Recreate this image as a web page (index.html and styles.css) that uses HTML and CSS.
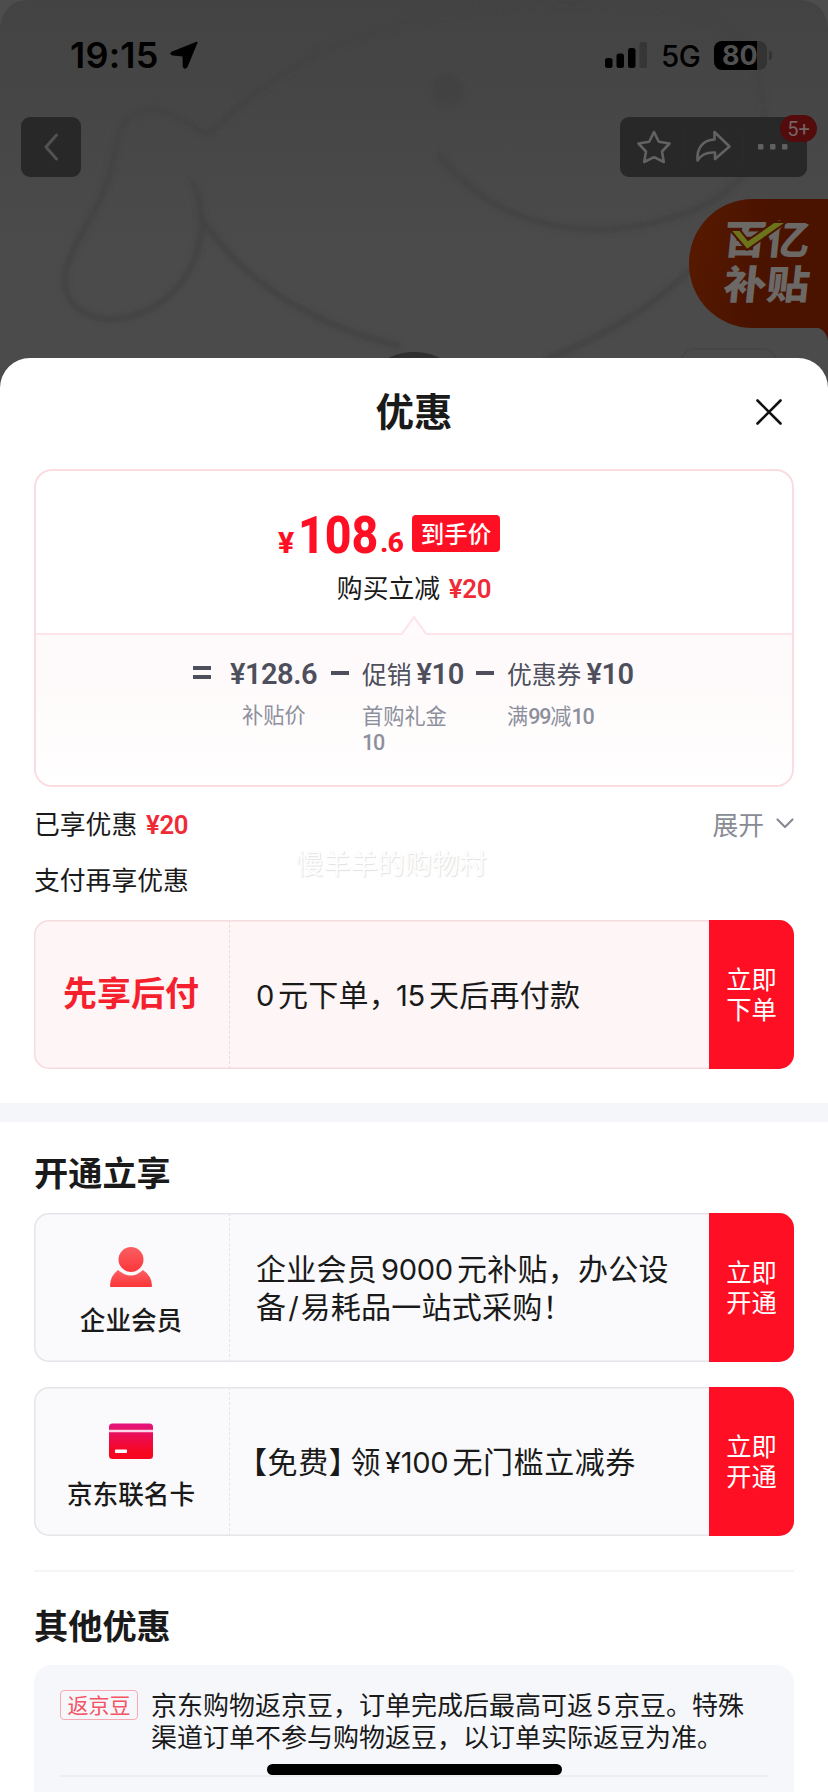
FILE: index.html
```html
<!DOCTYPE html>
<html lang="zh-CN">
<head>
<meta charset="utf-8">
<title>优惠</title>
<link rel="stylesheet" href="styles.css">
</head>
<body>
<div class="screen">
  <header class="scene">
    <svg class="backdrop" viewBox="0 0 828 400" width="828" height="400" fill="none">
      <defs><filter id="soft" x="-5%" y="-5%" width="110%" height="110%"><feGaussianBlur stdDeviation="2.800"/></filter></defs>
      <path d="M0 0H30Q3 0 0 28ZM828 0H798Q825 0 828 28Z" fill="#4d4d4d"/>
      <g stroke="#424242" stroke-width="6" filter="url(#soft)" stroke-linejoin="round">
        <path d="M207 135C275 70 330 40 414 20C520 -8 640 -4 715 22C755 45 765 80 763 120C758 175 720 205 670 218C600 240 530 228 485 198C460 180 445 165 438 152"/>
        <path d="M207 135C170 108 140 98 122 126C112 150 115 175 92 215C65 262 55 285 75 306C105 332 155 316 180 284C207 250 206 210 192 180"/>
        <path d="M198 213C240 280 310 325 400 346M548 358C610 335 660 300 692 268"/>
        <circle cx="448" cy="90" r="14" fill="#424242"/>
      </g>
      <circle cx="414" cy="411" r="59" fill="#303030"/>
      <rect x="681" y="349" width="96" height="40" rx="14" stroke="#464646" stroke-width="1.5"/>
    </svg>
    <div class="status">
      <span class="clock">19:15</span>
      <svg class="loc" viewBox="0 0 28 28" width="28" height="28"><path d="M26.500 .8Q28 .3 27.400 2L17.500 26Q15 29.500 12.800 26L12.500 15.500 2.500 14.500Q-1.500 13 1.500 10.800Z"/></svg>
      <svg class="signal" viewBox="0 0 42 27" width="42" height="27"><rect y="16" width="7.500" height="10" rx="2.500"/><rect x="11.500" y="11.500" width="7.500" height="14.500" rx="2.500"/><rect x="23" y="6" width="7.500" height="20" rx="2.500"/><rect x="34.500" width="7.500" height="26" rx="2.500" fill="#363636"/></svg>
      <span class="net">5G</span>
      <span class="battery">80</span><i class="nub"></i>
    </div>
    <div class="nav">
      <span class="back"><svg viewBox="0 0 60 60" width="60" height="60" fill="none"><path d="M35.500 18L25 30 35.500 42" stroke="#515151" stroke-width="3" stroke-linecap="round" stroke-linejoin="round"/></svg></span>
      <span class="tools">
        <svg viewBox="0 0 187 60" width="187" height="60" fill="none" stroke="#626262" stroke-width="2.600" stroke-linejoin="round">
          <path d="M34 15L38.800 24.800 49.500 26.500 42 34.500 43.800 45 34 40.200 24.200 45 26 34.500 18.500 26.500 29.200 24.800Z"/>
          <path d="M94.500 15L109.500 29.500 95 42V35.500C86 35 81 37.500 77.500 43.500C76.500 31 83 23 94.500 22.500Z"/>
          <path d="M64 16V44M123 16V44" stroke="#2d2d2d" stroke-width="1"/>
          <g fill="#606060" stroke="none"><rect x="138" y="27" width="5.500" height="5.500" rx="1"/><rect x="150" y="27" width="5.500" height="5.500" rx="1"/><rect x="162" y="27" width="5.500" height="5.500" rx="1"/></g>
        </svg>
        <b class="count">5+</b>
      </span>
    </div>
    <div class="subsidy">
      <span>百亿</span><span>补贴</span>
      <svg class="tick" viewBox="0 0 60 32" width="60" height="32"><path d="M2 9H12L20 19 46 1H59L19 29Z" fill="#6c741b" stroke="#4b1300" stroke-width="2"/></svg>
      <svg class="flare" viewBox="0 0 14 14" width="14" height="14"><path d="M0 0Q12 1 14 14V0Z" fill="#4a1100"/></svg>
    </div>
  </header>

  <main class="sheet">
    <div class="title">
      <h1>优惠</h1>
      <svg class="close" viewBox="0 0 26 26" width="26" height="26"><path d="M1.500 1.500L24.500 24.500M24.500 1.500L1.500 24.500" stroke="#111" stroke-width="2.600" stroke-linecap="round"/></svg>
    </div>

    <section class="deal">
      <div class="deal-top">
        <div class="price"><span class="yen">¥</span><span class="big">108</span><span class="dec">.6</span><span class="chip">到手价</span></div>
        <div class="save">购买立减 <b class="num">¥20</b></div>
      </div>
      <div class="deal-bottom">
        <svg class="peak" viewBox="0 0 30 20" width="30" height="20"><path d="M0 20H2L15 2 28 20H30" fill="#fffafb" stroke="#fce4e8" stroke-width="2"/></svg>
        <div class="formula">
          <i class="equals"></i>
          <div class="term first"><p><b class="num">¥128.6</b></p><small>补贴价</small></div>
          <i class="minus"></i>
          <div class="term promo"><p>促销<b class="num">¥10</b></p><small>首购礼金<br><em class="num">10</em></small></div>
          <i class="minus"></i>
          <div class="term coupon"><p>优惠券<b class="num">¥10</b></p><small>满<em class="num">99</em>减<em class="num">10</em></small></div>
        </div>
      </div>
    </section>

    <div class="line enjoyed"><span>已享优惠 <b class="num">¥20</b></span><span class="expand">展开<svg viewBox="0 0 18 12" width="18" height="12" fill="none"><path d="M1.500 1.500L9 9 16.500 1.500" stroke="#888b94" stroke-width="2.200" stroke-linecap="round" stroke-linejoin="round"/></svg></span></div>
    <div class="line again">支付再享优惠<span class="mark">慢羊羊的购物村</span></div>

    <article class="offer pink">
      <div class="kind"><strong>先享后付</strong></div>
      <p class="desc"><span><i class="lat zero">0</i>元下单，<i class="lat after">15</i>天后再付款</span></p>
      <div class="act"><span>立即</span><span>下单</span></div>
    </article>
  </main>

  <section class="block opening">
    <h2>开通立享</h2>
    <article class="offer">
      <div class="kind">
        <svg viewBox="0 0 44 42" width="44" height="42"><defs><linearGradient id="rd" x2="0" y2="1"><stop stop-color="#fa6164"/><stop offset="1" stop-color="#fb3438"/></linearGradient></defs><g fill="url(#rd)"><path d="M9 24Q22 35 34 24Q43 30 43 40Q43 41 42 41H2Q1 41 1 40Q1 30 9 24Z"/><circle cx="22" cy="13.500" r="13.500" stroke="#fafafc" stroke-width="2"/></g></svg>
        <span>企业会员</span>
      </div>
      <p class="desc"><span>企业会员<i class="lat">9000</i>元补贴，办公设<br>备<i class="lat slash">/</i>易耗品一站式采购！</span></p>
      <div class="act"><span>立即</span><span>开通</span></div>
    </article>
    <article class="offer">
      <div class="kind">
        <svg viewBox="0 0 44 42" width="44" height="42"><defs><linearGradient id="cd" x2="0" y2="1"><stop stop-color="#e3147e"/><stop offset=".8" stop-color="#f6061f"/></linearGradient></defs><rect y="3.500" width="44" height="35.500" rx="3.500" fill="url(#cd)"/><path d="M0 11H44" stroke="#fcd5e8" stroke-width="2.400"/><rect x="6" y="29.500" width="12" height="3.500" rx=".8" fill="#fff"/></svg>
        <span>京东联名卡</span>
      </div>
      <p class="desc free"><span><i class="half">【</i>免费<i class="half">】</i><i class="lead">领</i><i class="lat">¥100</i>无门槛立减券</span></p>
      <div class="act"><span>立即</span><span>开通</span></div>
    </article>
  </section>

  <section class="block other">
    <h2>其他优惠</h2>
    <div class="perks">
      <div class="perk"><span class="tag">返京豆</span><p>京东购物返京豆，订单完成后最高可返<i class="lat">5</i>京豆。特殊<br>渠道订单不参与购物返豆，以订单实际返豆为准。</p></div>
    </div>
  </section>
  <div class="home"></div>
</div>
</body>
</html>
```
FILE: styles.css
```css
* { box-sizing: border-box; }
body { margin: 0; background: #4c4c4c; }
h1, h2, p { margin: 0; }
i, em { font-style: normal; }
.screen {
  position: relative;
  width: 828px;
  height: 1792px;
  overflow: hidden;
  color: #1a1a1a;
  background: linear-gradient(#434343, #4b4b4b 260px, #4b4b4b);
  font-family: "Noto Sans CJK SC", sans-serif;
}
.scene { position: relative; height: 358px; }
.backdrop { position: absolute; left: 0; top: 0; }

.status {
  position: relative;
  display: flex;
  align-items: center;
  height: 110px;
  padding: 0 55px 0 70px;
  color: #000;
  font-family: Inter, sans-serif;
}
.clock { width: 100px; font-size: 36px; font-weight: 600; letter-spacing: 0.2px; white-space: nowrap; }
.signal { margin-left: 407px; }
.net { margin-left: 14px; width: 53px; font-size: 29.500px; font-weight: 500; letter-spacing: -0.6px; margin-top: 2px; }
.battery {
  width: 53px;
  height: 29px;
  padding-left: 8px;
  border-radius: 8px;
  background: linear-gradient(90deg, #000 43px, #333 43px);
  color: #515151;
  font-size: 27px;
  font-weight: 700;
  line-height: 30px;
}
.nub { width: 3px; height: 9px; margin-left: 2px; border-radius: 0 4px 4px 0; background: #333; }

.nav {
  position: relative;
  display: flex;
  justify-content: space-between;
  margin-top: 7px;
  padding: 0 21px;
}
.back, .tools { position: relative; height: 60px; border-radius: 9px; background: #282828; }
.count {
  position: absolute;
  top: -2px;
  right: -10px;
  width: 37px;
  height: 27px;
  border-radius: 14px;
  background: #530b0b;
  color: #746464;
  font: 400 20px/28px Roboto, sans-serif;
  text-align: center;
}
.subsidy {
  position: absolute;
  right: 0;
  top: 199px;
  display: flex;
  flex-direction: column;
  align-items: flex-start;
  width: 139px;
  height: 129px;
  padding: 15px 0 0 35px;
  border-radius: 64px 0 0 64px;
  background: linear-gradient(100deg, #581a00, #4a1300 50%);
  color: #6b6866;
}
.subsidy span { font-size: 43px; font-weight: 800; line-height: 45px; transform: skewX(-6deg) scaleY(.92); white-space: nowrap; }
.tick { position: absolute; left: 39px; top: 22px; }
.flare { position: absolute; right: 0; bottom: -13px; }

.sheet {
  position: relative;
  height: 745px;
  padding: 0 34px;
  border-radius: 30px 30px 0 0;
  background: #fff;
}
.title { display: flex; align-items: center; justify-content: center; height: 111px; padding-bottom: 9px; }
h1 { font-size: 38.500px; line-height: 50px; font-weight: 700; }
.close { position: absolute; right: 46px; top: 41px; }

.num { font-family: Roboto, "Noto Sans CJK SC", sans-serif; font-weight: 600; }
.deal { height: 318px; border: 2px solid #fadce1; border-radius: 18px; overflow: hidden; }
.deal-top { height: 162px; padding-top: 45px; }
.price {
  display: flex;
  align-items: flex-end;
  height: 46px;
  margin-left: 242px;
  color: #ff0f23;
  font-family: Roboto, sans-serif;
  font-weight: 800;
}
.yen { width: 20px; margin-bottom: 4px; font-size: 30px; line-height: 31px; }
.big { width: 82px; margin-bottom: -1px; font-size: 51px; line-height: 55px; transform: scaleX(.91); transform-origin: 0 0; }
.dec { width: 32px; margin-bottom: 4px; font-size: 28.500px; line-height: 31px; letter-spacing: -1px; }
.chip {
  width: 88px;
  height: 37px;
  margin-bottom: 10px;
  border-radius: 4px;
  background: #ff0f23;
  color: #fff;
  font: 500 23.500px/36px "Noto Sans CJK SC", sans-serif;
  text-align: center;
}
.save { margin-top: 6px; text-align: center; font-size: 25.800px; line-height: 38px; }
.save .num, .enjoyed .num { margin-left: 3px; color: #ef2b37; letter-spacing: -0.3px; }
.deal-bottom {
  position: relative;
  height: 152px;
  border-top: 2px solid #fce4e8;
  background: linear-gradient(#fef9fa, #fffdfd 130px, #fff);
}
.peak { position: absolute; left: 363px; top: -20px; }
.formula { display: flex; padding: 18px 0 0 157px; color: #4d505c; }
.term p { font-size: 24.800px; line-height: 40px; white-space: nowrap; }
.term p .num { font-size: 29px; letter-spacing: -0.5px; }
.term small { display: block; margin-top: 8px; color: #8d909c; font-size: 21.200px; line-height: 26px; }
.term small .num { font-weight: 500; font-size: 21.500px; letter-spacing: -1.200px; }
.first { width: 101px; margin-left: 19px; }
.first small { margin: 7px 0 0 12px; }
.promo { width: 114px; margin-left: 13px; }
.coupon { margin-left: 13px; }
.promo p .num, .coupon p .num { margin-left: 5px; }
.equals { width: 18px; height: 13px; margin-top: 13px; border-top: 4px solid #4d505c; border-bottom: 4px solid #4d505c; }
.minus { width: 18px; height: 4px; margin-top: 18px; background: #4d505c; }

.line { display: flex; justify-content: space-between; font-size: 25.800px; line-height: 38px; }
.enjoyed { margin-top: 17px; }
.expand { display: flex; align-items: center; gap: 12px; color: #888b94; }
.again { position: relative; margin: 16px 0 22px; }
.mark {
  position: absolute;
  left: 262px;
  top: -17px;
  color: #fefefe;
  font-size: 27.200px;
  line-height: 38px;
  text-shadow: 1px 1px 1px #e2e2e2, 0 0 1px #f0f0f0;
}

.offer {
  display: grid;
  grid-template-columns: 196px 1fr 85px;
  height: 149px;
  overflow: hidden;
  border-radius: 15px;
  background: #fafafc;
  box-shadow: inset 0 0 0 1.500px #e4e5e9;
}
.kind {
  display: flex;
  flex-direction: column;
  align-items: center;
  padding-top: 33px;
  padding-right: 1px;
  border-right: 1px dashed #e4e5e9;
  font-size: 25.600px;
  font-weight: 500;
  line-height: 38px;
}
.kind svg { margin-bottom: 12px; }
.desc { display: flex; align-items: center; padding: 0 0 0 26px; font-size: 30px; line-height: 35.500px; letter-spacing: 0.25px; white-space: nowrap; }
.act {
  display: flex;
  flex-direction: column;
  align-items: center;
  justify-content: center;
  padding-bottom: 3px;
  background: #ff0f23;
  color: #fff;
  font-size: 25.300px;
  line-height: 30px;
}
.pink { background: #fdf5f6; box-shadow: inset 0 0 0 1.500px #f7dade; }
.pink .kind { padding-top: 53px; border-color: #f0d8dc; color: #f61f2d; font-size: 34px; }
.pink strong { font-weight: 700; }
.lat { margin: 0 4px; font-family: Inter, sans-serif; font-size: .97em; letter-spacing: -0.3px; }
.zero { margin-left: 0; }
.after { margin-left: -3px; }
.slash { margin: 0 2px; }
.half { font-feature-settings: "halt"; }
.lead { margin-left: 6px; }
.free { padding-left: 22px; letter-spacing: 0.6px; }

.block { padding: 0 34px; background: #fff; }
h2 { font-size: 34.200px; line-height: 48px; font-weight: 700; }
.opening { height: 467px; border-top: 19px solid #f5f6fa; padding-top: 25px; }
.opening .offer { margin: 18px 0 25px; }
.other { height: 222px; }
.other h2 { padding-top: 28px; border-top: 2px solid #f5f5f7; }
.perks { height: 141px; margin-top: 17px; padding: 25px 26px 0; border-radius: 18px 18px 0 0; background: #f6f7fb; }
.perk { display: flex; align-items: flex-start; height: 87px; border-bottom: 2px solid #edeef2; }
.tag {
  width: 78px;
  height: 30px;
  border: 1.500px solid #f8a9b2;
  border-radius: 4px;
  color: #f35362;
  font-size: 21px;
  line-height: 27px;
  text-align: center;
}
.perk p { margin: -1px 0 0 13px; font-size: 26px; line-height: 30px; white-space: nowrap; }
.perk .lat { margin: 0 3px; }
.home { position: absolute; left: 267px; bottom: 17px; width: 295px; height: 11px; border-radius: 6px; background: #000; }
```
